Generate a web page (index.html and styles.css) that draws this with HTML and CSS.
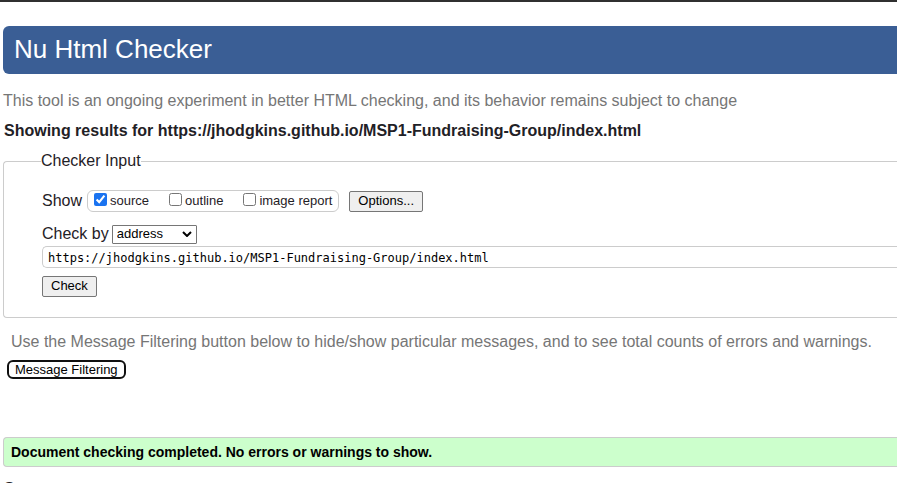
FILE: index.html
```html
<!DOCTYPE html>
<html lang="en">
<head>
<meta charset="utf-8">
<title>Nu Html Checker</title>
<link rel="stylesheet" href="styles.css">
</head>
<body>
<header class="banner"><h1>Nu Html Checker</h1></header>
<main>
  <p class="about">This tool is an ongoing experiment in better HTML checking, and its behavior remains subject to change</p>
  <h2 class="results-title">Showing results for https://jhodgkins.github.io/MSP1-Fundraising-Group/index.html</h2>
  <form>
    <fieldset class="checker">
      <legend>Checker Input</legend>
      <div class="row show-row">
        <span class="row-label">Show</span>
        <div class="show-options">
          <label><input type="checkbox" checked>source</label>
          <label><input type="checkbox">outline</label>
          <label><input type="checkbox">image report</label>
        </div>
        <button type="button" class="btn">Options...</button>
      </div>
      <div class="row method-row">
        <label class="row-label" for="method">Check by</label>
        <div class="select-wrap">
          <select id="method"><option>address</option><option>file upload</option><option>text input</option></select>
          <svg class="chevron" viewBox="0 0 10 6" aria-hidden="true"><path d="M1 1l4 4 4-4"/></svg>
        </div>
      </div>
      <input class="address" type="text" aria-label="Address" value="https://jhodgkins.github.io/MSP1-Fundraising-Group/index.html">
      <button type="button" class="btn">Check</button>
    </fieldset>
  </form>
  <p class="hint">Use the Message Filtering button below to hide/show particular messages, and to see total counts of errors and warnings.</p>
  <button type="button" class="filter-btn">Message Filtering</button>
  <p class="success">Document checking completed. No errors or warnings to show.</p>
  <h2 class="source-title">Source</h2>
</main>
</body>
</html>
```
FILE: styles.css
```css
* { box-sizing: border-box; }
html { height: 100%; overflow: hidden; }
body {
  height: 100%;
  margin: 0;
  padding-left: 3px;
  overflow: hidden;
  background: #fff;
  color: #1f2126;
  font: 16px/20px "Liberation Sans", Arial, sans-serif;
}
body::before {
  content: "";
  display: block;
  height: 2px;
  margin: 0 0 24px -3px;
  background: #303030;
}
h1, h2, p { margin: 0; }
.banner {
  padding: 7px 11px 9px;
  border-radius: 6px 0 0 6px;
  background: #3a5e95;
  color: #fff;
}
.banner h1 { font-size: 26px; line-height: 32px; font-weight: 400; }
.about { margin-top: 17px; color: #767676; }
.results-title { margin: 10px 0 10px 1px; font-size: 16px; line-height: 20px; }
.checker {
  min-width: 0;
  margin: 0;
  padding: 19px 0 20px 38px;
  border: 1px solid #ccc;
  border-right: 0;
  border-radius: 4px 0 0 4px;
}
.checker legend { margin-left: -1px; padding: 0; }
.row { display: flex; align-items: center; }
.show-row { gap: 5px; }
.show-options {
  display: flex;
  align-items: center;
  gap: 20px;
  height: 22px;
  margin-right: 5px;
  padding: 0 6px;
  border: 1px solid #ccc;
  border-radius: 6px;
  font-size: 13px;
  line-height: 22px;
}
.show-options label { display: flex; align-items: center; gap: 3px; }
.show-options input { width: 13px; height: 13px; margin: 0 0 4px; accent-color: #1a73f0; }
.btn {
  height: 21px;
  padding: 0 8px;
  border: 1px solid #767676;
  border-radius: 2px;
  background: #efefef;
  color: #000;
  font: 13px/18px "Liberation Sans", Arial, sans-serif;
}
.method-row { gap: 3px; margin-top: 12px; }
.select-wrap { display: grid; align-items: center; }
.select-wrap select {
  width: 85px;
  height: 19px;
  padding: 0 4px;
  border: 1px solid #767676;
  border-radius: 1px;
  appearance: none;
  background: #fff;
  color: #000;
  font: 13px/16px "Liberation Sans", Arial, sans-serif;
}
.select-wrap > * { grid-area: 1 / 1; }
.chevron {
  justify-self: end;
  width: 10px;
  height: 6px;
  margin-right: 5px;
  fill: none;
  stroke: #000;
  stroke-width: 2;
  pointer-events: none;
}
.address {
  display: block;
  width: 100%;
  height: 22px;
  margin: 2px 0 7px;
  padding: 1px 5px 0;
  border: 1px solid #ccc;
  border-right: 0;
  border-radius: 5px 0 0 5px;
  color: #000;
  font: 12px/18px "DejaVu Sans Mono", "Liberation Mono", monospace;
}
.hint { margin: 14px 0 8px 8px; color: #767676; }
.filter-btn {
  display: block;
  height: 19px;
  margin-left: 4px;
  padding: 0 6px;
  border: 2px solid #101010;
  border-radius: 6px;
  background: #fff;
  color: #000;
  font: 13px/15px "Liberation Sans", Arial, sans-serif;
}
.success {
  margin-top: 58px;
  padding: 5px 7px;
  border: 1px solid #ccc;
  border-right: 0;
  border-radius: 4px 0 0 4px;
  background: #cfc;
  color: #000;
  font-size: 14px;
  line-height: 18px;
  font-weight: 700;
}
.source-title { margin: 12px 0 0 1px; font-size: 16px; line-height: 20px; }
```
